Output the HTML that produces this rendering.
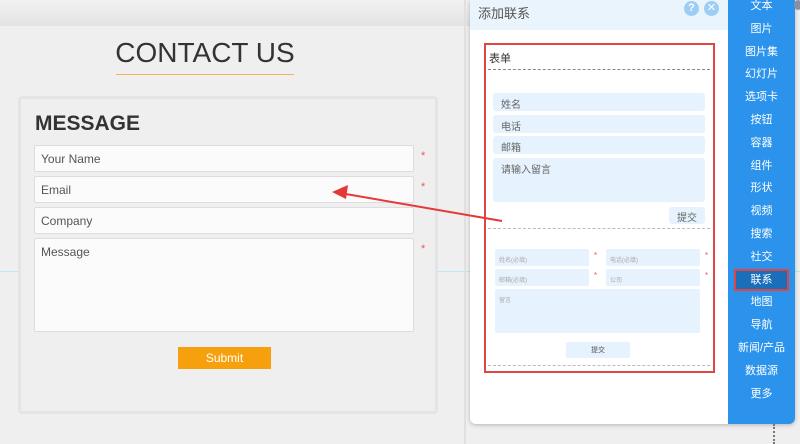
<!DOCTYPE html>
<html><head><meta charset="utf-8"><style>
*{box-sizing:border-box;margin:0;padding:0}
body{width:800px;height:444px;overflow:hidden;background:#efefef;font-family:"Liberation Sans","Noto Sans CJK SC",sans-serif;position:relative}
.a{position:absolute}
.in{position:absolute;background:#fbfbfb;border:1px solid #ddd;border-radius:2px;font-size:12px;color:#555;padding:6px 6px}
.star{position:absolute;color:#e55;font-size:11px}
.side div{height:22.8px;line-height:22.8px;text-align:center;color:#fff;font-size:11px}
.bi{position:absolute;background:#e6f2fd;border-radius:3px;font-size:10px;color:#666;padding:3px 8px}
.si{position:absolute;background:#e6f2fd;border-radius:2px;font-size:6px;color:#aaa;padding:6px 4px}
</style></head><body>
<div class="a" style="left:0;top:0;width:470px;height:26px;background:linear-gradient(#f2f2f2,#e2e2e2)"></div>
<div class="a" style="left:464px;top:0;width:2px;height:444px;background:#e0e0e0"></div>
<div class="a" style="left:0;top:271px;width:800px;height:1px;background:#bfe6f3"></div>
<div class="a" style="left:96px;top:37px;width:218px;text-align:center;font-size:28px;color:#333;white-space:nowrap">CONTACT US</div>
<div class="a" style="left:116px;top:74px;width:178px;height:1px;background:#f0b55a"></div>
<div class="a" style="left:18px;top:96px;width:420px;height:318px;border:3px solid #e2e4e6;border-radius:4px;background:#efefef"></div>
<div class="a" style="left:35px;top:112px;font-size:21px;font-weight:bold;color:#333">MESSAGE</div>
<div class="in" style="left:34px;top:145px;width:380px;height:27px">Your Name</div>
<div class="star" style="left:421px;top:150px">*</div>
<div class="in" style="left:34px;top:176px;width:380px;height:27px">Email</div>
<div class="star" style="left:421px;top:181px">*</div>
<div class="in" style="left:34px;top:207px;width:380px;height:27px">Company</div>
<div class="in" style="left:34px;top:238px;width:380px;height:94px">Message</div>
<div class="star" style="left:421px;top:243px">*</div>
<div class="a" style="left:178px;top:347px;width:93px;height:22px;background:#f7a00e;color:#fff;font-size:12px;text-align:center;line-height:22px">Submit</div>
<div class="a" style="left:470px;top:0;width:325px;height:424px;background:#fff;border-radius:0 0 6px 6px;box-shadow:0 1px 4px rgba(0,0,0,.25)"></div>
<div class="a" style="left:470px;top:0;width:258px;height:30px;background:#eaf4fd;font-size:13px;color:#555;padding:3px 8px">添加联系</div>
<div class="a" style="left:684px;top:1px;width:15px;height:15px;border-radius:50%;background:#9dcdf5;color:#fff;font-size:11px;text-align:center;line-height:15px;font-weight:bold">?</div>
<div class="a" style="left:704px;top:1px;width:15px;height:15px;border-radius:50%;background:#9dcdf5;color:#fff;font-size:11px;text-align:center;line-height:15px">✕</div>
<div class="a" style="left:484px;top:43px;width:231px;height:330px;border:2px solid #e04545"></div>
<div class="a" style="left:489px;top:50px;font-size:11px;color:#333">表单</div>
<div class="a" style="left:488px;top:69px;width:222px;border-top:1px dashed #888"></div>
<div class="bi" style="left:493px;top:93px;width:212px;height:18px">姓名</div>
<div class="bi" style="left:493px;top:115px;width:212px;height:18px">电话</div>
<div class="bi" style="left:493px;top:136px;width:212px;height:18px">邮箱</div>
<div class="bi" style="left:493px;top:158px;width:212px;height:44px">请输入留言</div>
<div class="bi" style="left:669px;top:207px;width:36px;height:17px;padding:2px 8px">提交</div>
<div class="a" style="left:488px;top:228px;width:222px;border-top:1px dashed #bbb"></div>
<div class="si" style="left:495px;top:249px;width:94px;height:17px">姓名(必填)</div>
<div class="star" style="left:594px;top:251px;font-size:8px">*</div>
<div class="si" style="left:606px;top:249px;width:94px;height:17px">电话(必填)</div>
<div class="star" style="left:705px;top:251px;font-size:8px">*</div>
<div class="si" style="left:495px;top:269px;width:94px;height:17px">邮箱(必填)</div>
<div class="star" style="left:594px;top:271px;font-size:8px">*</div>
<div class="si" style="left:606px;top:269px;width:94px;height:17px">公司</div>
<div class="star" style="left:705px;top:271px;font-size:8px">*</div>
<div class="si" style="left:495px;top:289px;width:205px;height:44px">留言</div>
<div class="si" style="left:566px;top:342px;width:64px;height:16px;text-align:center;font-size:7px;color:#555;padding:3px">提交</div>
<div class="a" style="left:488px;top:365px;width:222px;border-top:1px dashed #bbb"></div>
<svg class="a" style="left:0;top:0" width="800" height="444"><line x1="502" y1="221" x2="340" y2="193" stroke="#e53935" stroke-width="2"/><polygon points="332,192 348,185 346,199" fill="#e53935"/></svg>
<div class="a side" style="left:728px;top:-5px;width:67px;height:429px;background:#2b93ec;border-radius:0 0 6px 0">
<div>文本</div><div>图片</div><div>图片集</div><div>幻灯片</div><div>选项卡</div><div>按钮</div><div>容器</div><div>组件</div><div>形状</div><div>视频</div><div>搜索</div><div>社交</div><div style="background:#1b6fba;margin:0 6px;border:2px solid #e04545;line-height:19px">联系</div><div>地图</div><div>导航</div><div>新闻/产品</div><div>数据源</div><div>更多</div></div>
<div class="a" style="left:794px;top:0;width:8px;height:10px;border-radius:50%;background:#8a8fa0"></div>
<div class="a" style="left:773px;top:424px;height:20px;border-left:2px dotted #777"></div>
</body></html>
